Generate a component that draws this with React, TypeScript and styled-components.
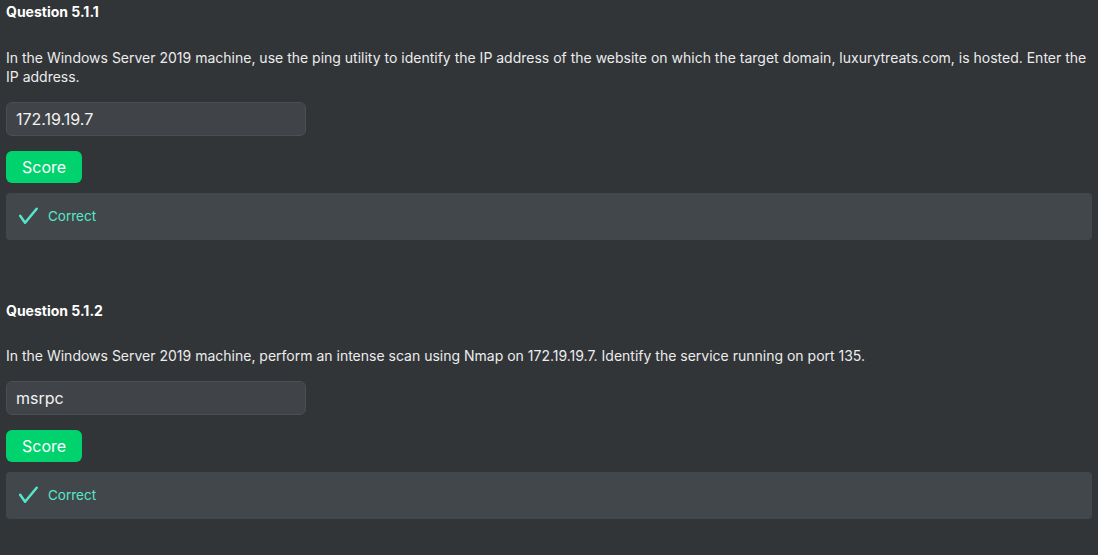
import React from "react";
import styled, { createGlobalStyle } from "styled-components";

const GlobalStyle = createGlobalStyle`
  html, body {
    margin: 0;
    padding: 0;
    background: #313538;
  }
  body {
    font-family: Inter, "Noto Sans", "Liberation Sans", sans-serif;
    color: #ececec;
  }
  * { box-sizing: border-box; }
`;

const Page = styled.div`
  width: 1098px;
  min-height: 555px;
  padding: 2px 6px 0 6px;
  display: flex;
  flex-direction: column;
  gap: 61px;
`;

const Question = styled.section`
  display: flex;
  flex-direction: column;
`;

const Title = styled.h3`
  margin: 0 0 26px 0;
  font-size: 14px;
  font-weight: 700;
  line-height: 19.5px;
  color: #ffffff;
`;

const Prompt = styled.p`
  margin: 0 0 15px 0;
  font-size: 14px;
  line-height: 19.5px;
  color: #ececec;
  font-weight: 400;
`;

const AnswerInput = styled.input`
  width: 300px;
  height: 34px;
  padding: 0 9px;
  background: #404448;
  border: 1px solid #4a4f53;
  border-radius: 6px;
  color: #f2f2f2;
  font-family: Inter, "Noto Sans", "Liberation Sans", sans-serif;
  font-size: 16px;
  outline: none;
`;

const ScoreButton = styled.button`
  align-self: flex-start;
  margin-top: 15px;
  height: 32px;
  padding: 0 16px;
  border: none;
  border-radius: 6px;
  background: #00d26e;
  color: #ffffff;
  font-family: Inter, "Noto Sans", "Liberation Sans", sans-serif;
  font-size: 16px;
  cursor: pointer;
`;

const Result = styled.div`
  margin-top: 10px;
  height: 47px;
  display: flex;
  align-items: center;
  gap: 10px;
  padding: 0 12px 0 13px;
  background: #42474b;
  border-radius: 4px;
  color: #56e7cb;
  font-size: 13.5px;
`;

const CheckIcon = () => (
  <svg width="19" height="19" viewBox="0 0 20 20" fill="none">
    <path
      d="M1.2 9.2 L6.4 16.6 L18.6 1.8"
      stroke="#56e7cb"
      strokeWidth="2.6"
      strokeLinecap="round"
      strokeLinejoin="round"
    />
  </svg>
);

type Q = { id: string; prompt: string; answer: string };

const questions: Q[] = [
  {
    id: "5.1.1",
    prompt:
      "In the Windows Server 2019 machine, use the ping utility to identify the IP address of the website on which the target domain, luxurytreats.com, is hosted. Enter the IP address.",
    answer: "172.19.19.7",
  },
  {
    id: "5.1.2",
    prompt:
      "In the Windows Server 2019 machine, perform an intense scan using Nmap on 172.19.19.7. Identify the service running on port 135.",
    answer: "msrpc",
  },
];

export default function App() {
  return (
    <>
      <GlobalStyle />
      <Page>
        {questions.map((q) => (
          <Question key={q.id}>
            <Title>Question {q.id}</Title>
            <Prompt>{q.prompt}</Prompt>
            <AnswerInput defaultValue={q.answer} readOnly />
            <ScoreButton>Score</ScoreButton>
            <Result>
              <CheckIcon />
              <span>Correct</span>
            </Result>
          </Question>
        ))}
      </Page>
    </>
  );
}
